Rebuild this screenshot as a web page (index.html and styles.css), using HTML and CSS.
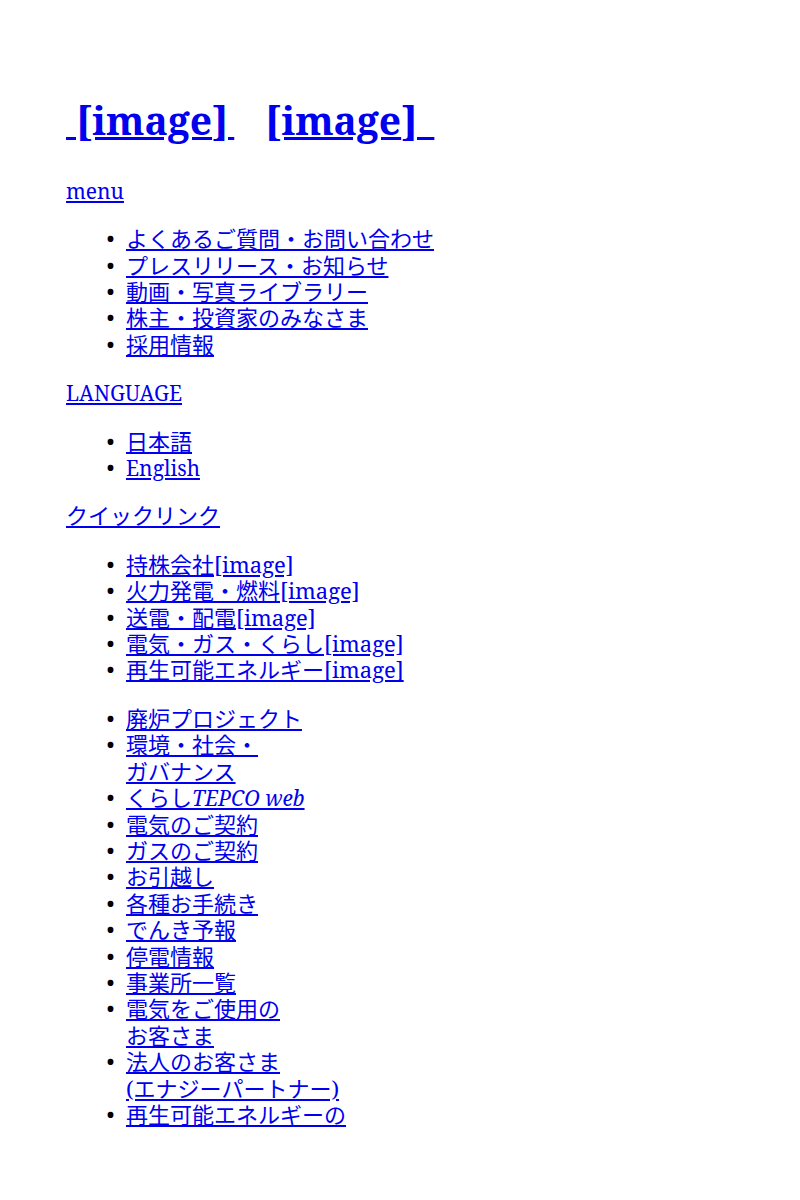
FILE: index.html
```html
<!DOCTYPE html>
<html lang="ja">
<head>
<meta charset="utf-8">
<title>TEPCO</title>
<link rel="stylesheet" href="styles.css">
</head>
<body>
<div class="page">
  <header class="site-header">
    <h1 class="logo"><a href="#">&nbsp;[image<span class="tail-a">]</span></a><a class="second" href="#">[image<span class="tail-b">]</span></a></h1>
  </header>

  <nav class="section">
    <p class="section-title"><a class="latin" href="#">menu</a></p>
    <ul class="links">
      <li><a href="#">よくあるご質問・お問い合わせ</a></li>
      <li><a href="#">プレスリリース・お知らせ</a></li>
      <li><a href="#">動画・写真ライブラリー</a></li>
      <li><a href="#">株主・投資家のみなさま</a></li>
      <li><a href="#">採用情報</a></li>
    </ul>
  </nav>

  <nav class="section">
    <p class="section-title"><a class="latin" href="#">LANGUAGE</a></p>
    <ul class="links">
      <li><a href="#">日本語</a></li>
      <li><a class="latin" href="#">English</a></li>
    </ul>
  </nav>

  <nav class="section">
    <p class="section-title"><a href="#">クイックリンク</a></p>
    <ul class="links">
      <li><a href="#">持株会社[image]</a></li>
      <li><a href="#">火力発電・燃料[image]</a></li>
      <li><a href="#">送電・配電[image]</a></li>
      <li><a href="#">電気・ガス・くらし[image]</a></li>
      <li><a href="#">再生可能エネルギー[image]</a></li>
    </ul>
    <ul class="links">
      <li><a href="#">廃炉プロジェクト</a></li>
      <li><a href="#">環境・社会・<br>ガバナンス</a></li>
      <li><a href="#">くらし<em class="latin">TEPCO web</em></a></li>
      <li><a href="#">電気のご契約</a></li>
      <li><a href="#">ガスのご契約</a></li>
      <li><a href="#">お引越し</a></li>
      <li><a href="#">各種お手続き</a></li>
      <li><a href="#">でんき予報</a></li>
      <li><a href="#">停電情報</a></li>
      <li><a href="#">事業所一覧</a></li>
      <li><a href="#">電気をご使用の<br>お客さま</a></li>
      <li><a href="#">法人のお客さま<br>(エナジーパートナー)</a></li>
      <li><a href="#">再生可能エネルギーの</a></li>
    </ul>
  </nav>
</div>
</body>
</html>
```
FILE: styles.css
```css
html, body {
  margin: 0;
  padding: 0;
  background: #ffffff;
}

body {
  font-family: "Noto Serif", "Noto Sans CJK JP", serif;
  font-size: 22px;
  line-height: 26.4px;
  color: #000000;
}

a {
  color: #0000ee;
  text-decoration: underline;
}

.latin {
  font-size: 21px;
  line-height: 1;
}

.page {
  padding: 97px 0 0 66px;
}

.logo {
  margin: 0 0 33px 0;
  font-size: 39px;
  font-weight: 700;
  line-height: 1.2;
}

.logo .second {
  margin-left: 31px;
}

.tail-a {
  letter-spacing: 6px;
}

.tail-b {
  letter-spacing: 17px;
}

.section-title {
  margin: 22px 0;
}

.links {
  margin: 22px 0;
  padding: 0 0 0 60px;
  list-style: disc;
}

.links li {
  margin: 0;
}

.links li::marker {
  content: "\2022\00a0\00a0";
  color: #000000;
}

em {
  font-style: italic;
}
```
